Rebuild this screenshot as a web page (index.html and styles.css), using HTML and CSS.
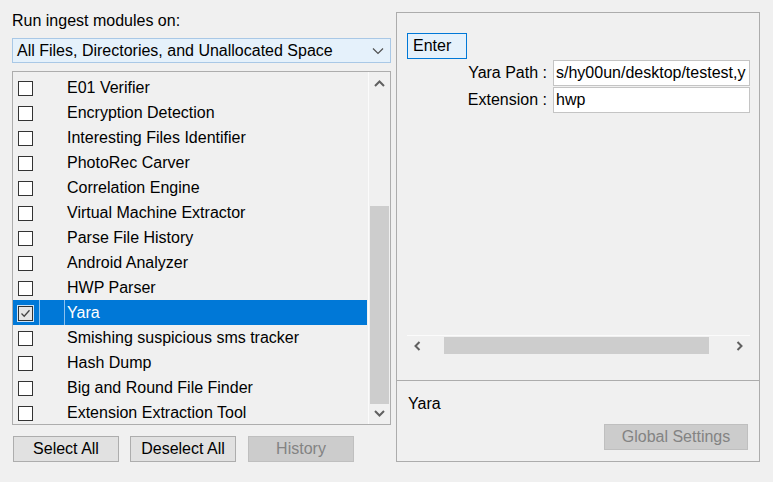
FILE: index.html
```html
<!DOCTYPE html>
<html>
<head>
<meta charset="utf-8">
<link rel="stylesheet" href="styles.css">
</head>
<body>
<div class="app">
  <div class="left">
    <div class="label">Run ingest modules on:</div>
    <div class="combo">
      <span class="combo-text">All Files, Directories, and Unallocated Space</span>
      <svg class="combo-chev" width="12" height="8" viewBox="0 0 12 8"><polyline points="1,1.5 6,6.5 11,1.5" fill="none" stroke="#505050" stroke-width="1.2"/></svg>
    </div>
    <div class="list">
      <div class="rows">
        <div class="row"><div class="c1"><span class="cb"></span></div><div class="c2"></div><div class="c3">E01 Verifier</div></div>
        <div class="row"><div class="c1"><span class="cb"></span></div><div class="c2"></div><div class="c3">Encryption Detection</div></div>
        <div class="row"><div class="c1"><span class="cb"></span></div><div class="c2"></div><div class="c3">Interesting Files Identifier</div></div>
        <div class="row"><div class="c1"><span class="cb"></span></div><div class="c2"></div><div class="c3">PhotoRec Carver</div></div>
        <div class="row"><div class="c1"><span class="cb"></span></div><div class="c2"></div><div class="c3">Correlation Engine</div></div>
        <div class="row"><div class="c1"><span class="cb"></span></div><div class="c2"></div><div class="c3">Virtual Machine Extractor</div></div>
        <div class="row"><div class="c1"><span class="cb"></span></div><div class="c2"></div><div class="c3">Parse File History</div></div>
        <div class="row"><div class="c1"><span class="cb"></span></div><div class="c2"></div><div class="c3">Android Analyzer</div></div>
        <div class="row"><div class="c1"><span class="cb"></span></div><div class="c2"></div><div class="c3">HWP Parser</div></div>
        <div class="row selected"><div class="c1"><span class="cb checked"><svg width="13" height="13" viewBox="0 0 13 13"><polyline points="2.5,6.5 5.2,9.2 10.5,3.2" fill="none" stroke="#444" stroke-width="1.3"/></svg></span></div><div class="c2"></div><div class="c3">Yara</div></div>
        <div class="row"><div class="c1"><span class="cb"></span></div><div class="c2"></div><div class="c3">Smishing suspicious sms tracker</div></div>
        <div class="row"><div class="c1"><span class="cb"></span></div><div class="c2"></div><div class="c3">Hash Dump</div></div>
        <div class="row"><div class="c1"><span class="cb"></span></div><div class="c2"></div><div class="c3">Big and Round File Finder</div></div>
        <div class="row"><div class="c1"><span class="cb"></span></div><div class="c2"></div><div class="c3">Extension Extraction Tool</div></div>
      </div>
      <div class="vscroll">
        <div class="varrow up"><svg width="11" height="7" viewBox="0 0 11 7"><polyline points="1,6 5.5,1.5 10,6" fill="none" stroke="#606060" stroke-width="2"/></svg></div>
        <div class="vtrack"><div class="vthumb"></div></div>
        <div class="varrow down"><svg width="11" height="7" viewBox="0 0 11 7"><polyline points="1,1 5.5,5.5 10,1" fill="none" stroke="#606060" stroke-width="2"/></svg></div>
      </div>
    </div>
    <div class="btns">
      <div class="btn">Select All</div>
      <div class="btn">Deselect All</div>
      <div class="btn disabled">History</div>
    </div>
  </div>
  <div class="right">
    <div class="top">
      <div class="viewport">
        <div class="enter">Enter</div>
        <div class="form">
          <div class="flabel">Yara Path :</div>
          <div class="field">s/hy00un/desktop/testest,y</div>
          <div class="flabel">Extension :</div>
          <div class="field">hwp</div>
        </div>
      </div>
      <div class="hscroll">
        <div class="harrow"><svg width="7" height="10" viewBox="0 0 7 10"><polyline points="5.5,1 1.5,5 5.5,9" fill="none" stroke="#606060" stroke-width="2"/></svg></div>
        <div class="htrack"><div class="hthumb"></div></div>
        <div class="harrow"><svg width="7" height="10" viewBox="0 0 7 10"><polyline points="1.5,1 5.5,5 1.5,9" fill="none" stroke="#606060" stroke-width="2"/></svg></div>
      </div>
    </div>
    <div class="bottom">
      <div class="name">Yara</div>
      <div class="btn disabled gs">Global Settings</div>
    </div>
  </div>
</div>
</body>
</html>
```
FILE: styles.css
```css
* { box-sizing: border-box; }
html, body { margin: 0; padding: 0; }
body {
  background: #f0f0f0;
  font-family: "Liberation Sans", Arial, sans-serif;
  font-size: 16px;
  color: #000;
  width: 773px;
  height: 482px;
  overflow: hidden;
}
.app {
  display: flex;
  gap: 5px;
  padding-left: 12px;
}
.left {
  width: 379px;
  padding-top: 11px;
  display: flex;
  flex-direction: column;
}
.label {
  height: 20px;
  line-height: 20px;
  margin-bottom: 7px;
}
.combo {
  height: 25px;
  border: 1px solid #a9c8e6;
  background: #e5f1fb;
  display: flex;
  align-items: center;
  padding-left: 4px;
  padding-right: 5px;
}
.combo-text { flex: 1; white-space: nowrap; }
.combo-chev { margin-right: 1px; }
.list {
  margin-top: 8px;
  height: 354px;
  border: 1px solid #adadad;
  display: flex;
  overflow: hidden;
}
.rows {
  width: 355px;
  padding-top: 3px;
  overflow: hidden;
}
.row {
  height: 25px;
  display: flex;
  margin-right: 1px;
  line-height: 25px;
  white-space: nowrap;
}
.c1 {
  width: 26px;
  display: flex;
  align-items: center;
  padding-left: 5px;
}
.c2 { width: 25px; border-left: 1px solid transparent; }
.c3 { flex: 1; border-left: 1px solid transparent; padding-left: 2px; }
.row.selected { background: #0078d7; color: #fff; }
.row.selected .c2, .row.selected .c3 { border-left-color: #8dc1ee; }
.cb {
  width: 15px;
  height: 15px;
  border: 1px solid #333;
  background: #fff;
  display: block;
  margin-top: 1px;
}
.cb.checked {
  background: #e6e6e6;
  outline: 1px solid #cfe3f5;
  display: flex;
  align-items: center;
  justify-content: center;
}
.vscroll {
  width: 22px;
  border-left: 1px solid #fbfbfb;
  display: flex;
  flex-direction: column;
}
.varrow {
  display: flex;
  align-items: center;
  justify-content: center;
}
.varrow.up { height: 21px; padding-top: 2px; }
.varrow.down { height: 20px; padding-bottom: 2px; }
.vtrack { flex: 1; padding: 0 1px 0 1px; display: flex; flex-direction: column; }
.vthumb {
  margin-top: 113px;
  height: 198px;
  background: #cdcdcd;
}
.btns {
  display: flex;
  gap: 12px;
  margin-top: 11px;
  margin-left: 1px;
}
.btn {
  width: 106px;
  height: 26px;
  border: 1px solid #adadad;
  background: #e1e1e1;
  display: flex;
  align-items: center;
  justify-content: center;
  white-space: nowrap;
}
.btns .btn:nth-child(2) { margin-left: -1px; }
.btn.disabled {
  background: #cccccc;
  border-color: #bfbfbf;
  color: #838383;
}
.right {
  margin-top: 12px;
  width: 364px;
  height: 450px;
  border: 1px solid #acacac;
  display: flex;
  flex-direction: column;
}
.top {
  height: 368px;
  border-bottom: 1px solid #acacac;
  padding: 0 9px 25px 10px;
  display: flex;
  flex-direction: column;
}
.viewport {
  flex: 1;
  padding-top: 20px;
  overflow: hidden;
}
.enter {
  width: 60px;
  height: 26px;
  border: 1px solid #0078d7;
  background: #e5f1fb;
  padding-left: 5px;
  line-height: 24px;
  margin-bottom: 1px;
}
.form {
  display: grid;
  grid-template-columns: 140px 197px;
  column-gap: 6px;
  row-gap: 1px;
}
.flabel {
  height: 26px;
  line-height: 26px;
  text-align: right;
  white-space: nowrap;
}
.field {
  height: 26px;
  line-height: 24px;
  border: 1px solid #c4c4c4;
  background: #fff;
  padding-left: 2px;
  white-space: nowrap;
  overflow: hidden;
}
.hscroll {
  height: 20px;
  border-top: 1px solid #fbfbfb;
  display: flex;
  align-items: stretch;
}
.harrow {
  width: 21px;
  display: flex;
  align-items: center;
  justify-content: center;
}
.htrack { flex: 1; padding: 1px 0 1px 16px; display: flex; }
.hthumb { width: 265px; background: #cdcdcd; }
.bottom {
  flex: 1;
  padding: 13px 11px 0 11px;
  display: flex;
  flex-direction: column;
  align-items: flex-start;
}
.name { height: 20px; line-height: 20px; margin-bottom: 10px; }
.gs { align-self: flex-end; width: 144px; }
```
